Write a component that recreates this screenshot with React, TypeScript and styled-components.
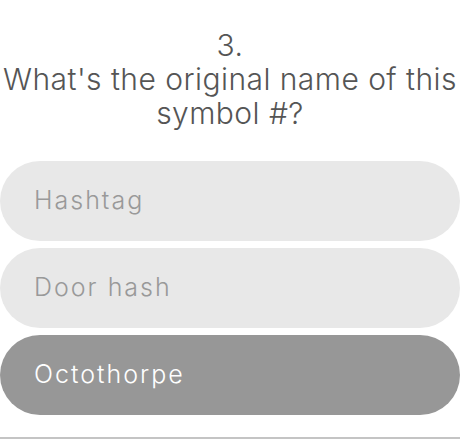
import React from "react";
import styled, { createGlobalStyle } from "styled-components";

const Global = createGlobalStyle`
  html, body { margin: 0; padding: 0; background: #ffffff; }
  body { font-family: "Inter", "Noto Sans", sans-serif; }
`;

const Page = styled.div`
  width: 460px;
  height: 439px;
  display: flex;
  flex-direction: column;
  box-sizing: border-box;
  padding-top: 28px;
  border-bottom: 2px solid #c4c4c4;
`;

const Question = styled.h1`
  margin: 0;
  font-weight: 300;
  font-size: 30px;
  letter-spacing: 0.45px;
  line-height: 34px;
  color: #555555;
  text-align: center;
  white-space: pre;
`;

const Options = styled.div`
  display: flex;
  flex-direction: column;
  gap: 7px;
  margin-top: 31px;
`;

const Option = styled.button<{ $selected?: boolean }>`
  all: unset;
  box-sizing: border-box;
  height: 80px;
  width: 100%;
  border-radius: 40px;
  padding: 0 34px 2px;
  display: flex;
  align-items: center;
  font-family: "Inter", "Noto Sans", sans-serif;
  font-weight: 300;
  font-size: 25px;
  letter-spacing: 2px;
  color: ${(p) => (p.$selected ? "#ffffff" : "#999999")};
  background: ${(p) => (p.$selected ? "#979797" : "#e8e8e8")};
`;

const options = ["Hashtag", "Door hash", "Octothorpe"];

export default function App() {
  return (
    <>
      <Global />
      <Page>
        <Question>{"3.\nWhat's the original name of this\nsymbol #?"}</Question>
        <Options>
          {options.map((o, i) => (
            <Option key={o} $selected={i === 2}>
              {o}
            </Option>
          ))}
        </Options>
      </Page>
    </>
  );
}
